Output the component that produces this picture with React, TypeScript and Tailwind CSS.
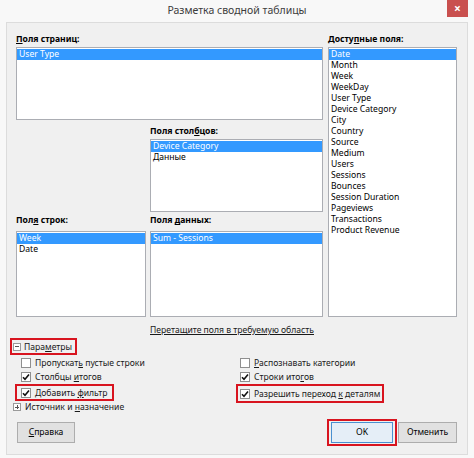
import React from "react";

const AVAILABLE = [
  "Date",
  "Month",
  "Week",
  "WeekDay",
  "User Type",
  "Device Category",
  "City",
  "Country",
  "Source",
  "Medium",
  "Users",
  "Sessions",
  "Bounces",
  "Session Duration",
  "Pageviews",
  "Transactions",
  "Product Revenue",
];

function ListBox({ items, className }: { items: string[]; className: string }) {
  return (
    <div className={`border border-[#abadb3] bg-white pt-px ${className}`}>
      {items.map((item, i) => (
        <div
          key={item}
          className={`h-[11px] overflow-hidden pl-[2px] leading-[11px] ${i === 0 ? "bg-[#3399ff] text-white" : "text-black"}`}
        >
          {item}
        </div>
      ))}
    </div>
  );
}

function Label({ children }: { children: React.ReactNode }) {
  return <div className="h-[14px] font-bold leading-[12px] text-black">{children}</div>;
}

function CheckBox({ checked }: { checked?: boolean }) {
  return (
    <div className="flex h-[10px] w-[10px] shrink-0 items-center justify-center border border-[#8f8f8f] bg-white">
      {checked && (
        <svg width="8" height="8" viewBox="0 0 8 8">
          <path d="M1 4.2 L3 6.3 L7 1.6" fill="none" stroke="#111" strokeWidth="1.6" />
        </svg>
      )}
    </div>
  );
}

function Expander({ open }: { open?: boolean }) {
  return (
    <div className="relative h-[8px] w-[8px] shrink-0 border border-[#9a9a9a] bg-white">
      <div className="absolute left-[1px] top-[2.5px] h-px w-[4px] bg-[#555]" />
      {!open && <div className="absolute left-[2.5px] top-[1px] h-[4px] w-px bg-[#555]" />}
    </div>
  );
}

// one character underlined, like a Windows access key
function K({ children }: { children: string }) {
  return <span className="underline underline-offset-1">{children}</span>;
}

function Option({ checked, children }: { checked?: boolean; children: React.ReactNode }) {
  return (
    <div className="flex items-center gap-[4px] whitespace-nowrap">
      <CheckBox checked={checked} />
      <span className="leading-[12px]">{children}</span>
    </div>
  );
}

export default function App() {
  return (
    <div className="flex h-[458px] w-[474px] flex-col bg-[#f8f8f8] font-['Noto_Sans',sans-serif] text-[8.6px] text-[#1a1a1a]">
      {/* Title bar */}
      <div className="relative flex h-[22px] items-center justify-center text-[10.5px] text-[#3c3c3c]">
        Разметка сводной таблицы
        <div className="absolute right-[6px] top-0 flex h-[17px] w-[21px] items-center justify-center bg-[#c9504f] text-[12px] font-bold leading-none text-white">
          ×
        </div>
      </div>

      {/* Content */}
      <div className="mx-[6px] flex h-[433px] flex-col border border-[#dcdcdc] bg-[#f0f0f0] pr-[10px] pt-[10px]">
        <div className="flex gap-[5px] pl-[9px]">
          <div className="flex w-[307px] flex-col">
            <Label>
              <K>П</K>оля страниц:
            </Label>
            <ListBox items={["User Type"]} className="h-[73px]" />

            <div className="mt-[5px] flex gap-[4px]">
              <div className="w-[130px]" />
              <div className="flex w-[173px] flex-col">
                <Label>
                  Поля стол<K>б</K>цов:
                </Label>
                <ListBox items={["Device Category", "Данные"]} className="h-[73px]" />
              </div>
            </div>

            <div className="mt-[2px] flex gap-[4px]">
              <div className="flex w-[130px] flex-col">
                <Label>
                  Пол<K>я</K> строк:
                </Label>
                <ListBox items={["Week", "Date"]} className="mt-[3px] h-[86px]" />
              </div>
              <div className="flex w-[173px] flex-col">
                <Label>
                  Поля <K>д</K>анных:
                </Label>
                <ListBox items={["Sum - Sessions"]} className="mt-[3px] h-[86px]" />
              </div>
            </div>
          </div>

          <div className="flex w-[129px] flex-col">
            <Label>
              Досту<K>п</K>ные поля:
            </Label>
            <ListBox items={AVAILABLE} className="h-[270px]" />
          </div>
        </div>

        <div className="mt-[7px] text-center leading-[12px] underline underline-offset-1">
          Перетащите поля в требуемую область
        </div>

        {/* Options */}
        <div className="ml-[3px] mt-[2px] flex h-[17px] w-fit min-w-[67px] items-center gap-[3px] whitespace-nowrap border-2 border-[#d8141f] pl-px pr-[3px]">
          <Expander open />
          <span className="leading-[12px]">
            Пара<K>м</K>етры
          </span>
        </div>

        <div className="flex">
          <div className="flex w-[229px] flex-col">
            <div className="flex h-[15px] items-center pl-[14px]">
              <Option>
                Пропускат<K>ь</K> пустые строки
              </Option>
            </div>
            <div className="flex h-[14px] items-center pl-[14px]">
              <Option checked>
                Столбцы <K>и</K>тогов
              </Option>
            </div>
            <div className="ml-[8px] flex h-[17px] w-fit min-w-[94px] items-center border-2 border-[#d8141f] pl-[4px] pr-[4px]">
              <Option checked>
                Добавить <K>ф</K>ильтр
              </Option>
            </div>
            <div className="flex h-[12px] items-center gap-[4px] whitespace-nowrap pl-[6px]">
              <Expander />
              <span className="leading-[12px]">
                Источник и <K>н</K>азначение
              </span>
            </div>
          </div>

          <div className="flex flex-col">
            <div className="flex h-[15px] items-center pl-[4px]">
              <Option>
                <K>Р</K>аспознавать категории
              </Option>
            </div>
            <div className="flex h-[14px] items-center pl-[4px]">
              <Option checked>
                Строки ито<K>г</K>ов
              </Option>
            </div>
            <div className="flex h-[19px] w-fit min-w-[137px] items-center border-2 border-[#d8141f] pl-[2px] pr-[2px]">
              <Option checked>
                Разрешить переход <K>к</K> деталям
              </Option>
            </div>
          </div>
        </div>

        {/* Buttons */}
        <div className="mt-auto flex items-center pb-[8px] pl-[10px]">
          <button className="h-[21px] w-[58px] border border-[#adadad] bg-[#e1e1e1] text-[8.6px] text-black">
            <K>С</K>правка
          </button>
          <div className="flex-1" />
          <div className="flex h-[27px] w-[70px] items-center justify-center border-2 border-[#d8141f]">
            <button className="h-[21px] w-[62px] border border-[#4a90d0] bg-[#e5eef7] text-[8.6px] text-black">
              OK
            </button>
          </div>
          <button className="ml-px h-[21px] w-[59px] border border-[#adadad] bg-[#e1e1e1] text-[8.6px] text-black">
            Отменить
          </button>
        </div>
      </div>
    </div>
  );
}
